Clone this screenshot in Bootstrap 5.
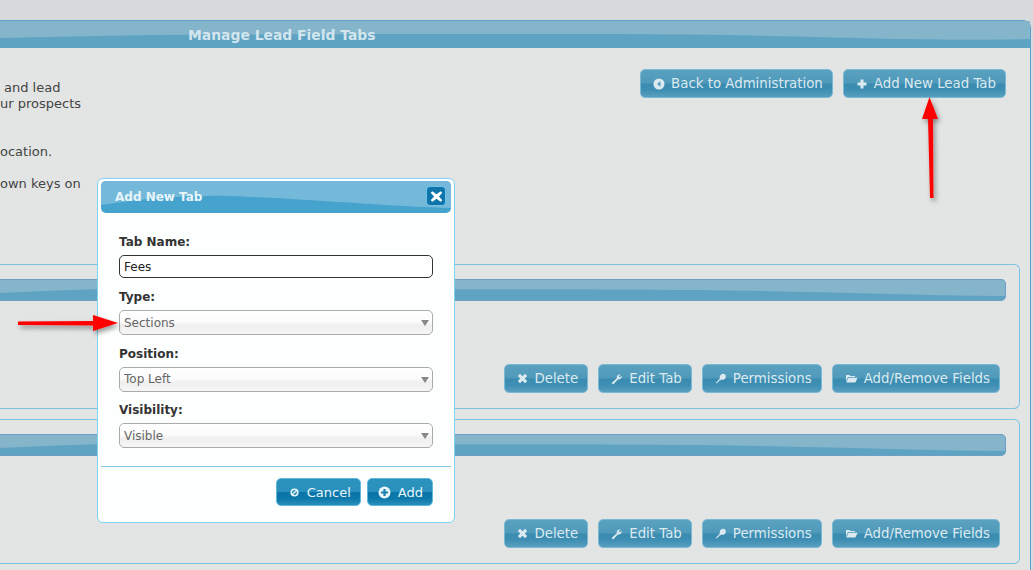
<!DOCTYPE html>
<html lang="en">
<head>
<meta charset="utf-8">
<title>Manage Lead Field Tabs</title>
<link rel="stylesheet" href="https://cdn.jsdelivr.net/npm/bootstrap@5.3.0/dist/css/bootstrap.min.css">
<style>
html,body{height:570px;overflow:hidden}
body{background:#d9dade;font-family:"DejaVu Sans",sans-serif;font-size:13px;color:#444;position:relative;padding-top:20px}
.main-panel{width:1031px;height:560px;background:#e3e5e4;border:1px solid #5f9fd0;border-left:0;border-bottom:0;border-top-right-radius:8px}
.wave-bar{position:relative;overflow:hidden;background:#5fa3c3}
.wave-bar svg.wave{position:absolute;inset:0;width:100%;height:100%}
.main-head{height:27px}
.main-head h1{position:relative;font-size:13.9px;font-weight:700;color:#d3e6ee;margin:0;padding:6px 0 0 188px;line-height:16px}
.top-zone{height:216px;padding:21px 24px 0 0}
.intro{line-height:16px;padding-top:11px}
.intro-line{height:16px;white-space:nowrap}
.intro-first{padding-left:4px}
.intro-gap{margin-top:32px}
.intro-gap-small{margin-top:16px}
.blue-btn{display:inline-flex;align-items:center;gap:6px;height:29px;padding:0 9px 0 12px;border:1px solid #7ab9d4;border-radius:5px;font-size:13.33px;line-height:1;color:#dbeaf0;background:linear-gradient(#5ba1c0 0,#4f99ba 48%,#3a8bb0 52%,#3f8fb4 75%,#599fbe 100%)}
.blue-btn svg{flex:none}
.plus-btn{gap:7px;padding-left:13px}
.section-box{width:1020px;border:1px solid #7cc4e6;border-left:0;border-radius:0 6px 6px 0;height:145px;padding:14px 13px 0 0}
.section-box+.section-box{margin-top:10px}
.section-bar{height:22px;border:1px solid #6d9fc6;border-left:0;border-radius:0 5px 5px 0}
.tools{padding:63px 6px 0 0;gap:10px}
.dialog-box{position:absolute;left:97px;top:178px;width:358px;height:345px;background:#fdfefe;border:1px solid #7fd2f2;border-radius:6px;padding:2px 3px}
.dialog-head{height:32px;border-radius:5px;background:#45a3ce;position:relative;overflow:hidden}
.dialog-head h2{position:relative;font-size:12px;font-weight:700;color:#e6f4fa;margin:0;padding:8px 0 0 14px;line-height:16px}
.x-btn{position:absolute;right:5px;top:5px;width:20px;height:20px;padding:0;border:1px solid #6fc3e8;border-radius:4px;background:#0f74aa;display:flex;align-items:center;justify-content:center}
.dialog-form{padding:22px 18px 0}
.dialog-form label{display:block;font-size:12px;font-weight:700;color:#333;line-height:15px;margin-bottom:5px}
.dialog-form .form-control{height:23px;min-height:0;padding:0 4px;border:1px solid #333;border-radius:5px;font-size:12px;color:#222;background:#fff;margin-bottom:12px;box-shadow:none}
.pick-wrap{position:relative;margin-bottom:11.5px}
.pick-wrap::after{content:"";position:absolute;right:4px;top:10px;border-left:4px solid transparent;border-right:4px solid transparent;border-top:6px solid #888}
.dialog-form .form-select{height:25px;padding:0 4px;border:1px solid #aaa;border-radius:5px;font-size:12px;color:#666;background:linear-gradient(#fff 0,#fcfcfc 45%,#efefef 62%,#f5f5f5 100%);box-shadow:none}
.dialog-rule{border-top:1px solid #8bcbea;margin-top:18px}
.dialog-foot{padding:11px 18px 0 0;gap:6px}
.deep-btn{display:inline-flex;align-items:center;gap:8px;height:28px;padding:0 9px 0 13px;border:1px solid #5fb8dc;border-radius:5px;font-size:13px;line-height:1;color:#e8f6fb;background:linear-gradient(#2b91bd 0,#2a90bc 48%,#0a74a8 52%,#0d78aa 75%,#2b8fbb 100%)}
.deep-add{padding:0 9px 0 10px;gap:7px}
.note-arrow{position:absolute;left:0;top:0;pointer-events:none}
</style>
</head>
<body>
<div class="main-panel">
  <div class="wave-bar main-head">
    <svg class="wave" viewBox="0 0 1031 27" preserveAspectRatio="none"><rect width="1031" height="27" fill="#5fa3c3"/><path d="M0 0H1031V18C1000 19 960 19 900 18C820 16 720 13 620 13C450 13 300 13 150 14C90 15 40 16 0 17Z" fill="#85b5cb"/></svg>
    <h1>Manage Lead Field Tabs</h1>
  </div>
  <div class="top-zone d-flex justify-content-between align-items-start">
    <div class="intro">
      <div class="intro-line intro-first">and lead</div>
      <div class="intro-line">ur prospects</div>
      <div class="intro-line intro-gap">ocation.</div>
      <div class="intro-line intro-gap-small">own keys on</div>
    </div>
    <div class="d-flex" style="gap:10px">
      <button type="button" class="blue-btn">
        <svg width="12" height="12" viewBox="0 0 13 13"><circle cx="6.5" cy="6.5" r="6" fill="#dbeaf0"/><path d="M8 3.5V9.5L4.5 6.5Z" fill="#4f99ba"/></svg>Back to Administration
      </button>
      <button type="button" class="blue-btn plus-btn">
        <svg width="10" height="10" viewBox="0 0 10 10"><path d="M3.5 0.5H6.5V3.5H9.5V6.5H6.5V9.5H3.5V6.5H0.5V3.5H3.5Z" fill="#dbeaf0"/></svg>Add New Lead Tab
      </button>
    </div>
  </div>

  <div class="section-box">
    <div class="wave-bar section-bar"><svg class="wave" viewBox="0 0 1006 20" preserveAspectRatio="none"><rect width="1006" height="20" fill="#5fa3c3"/><path d="M0 0H1006V16C900 15 800 11 700 10C550 9 350 9 100 9C60 10 30 12 0 13Z" fill="#85b5cb"/></svg></div>
    <div class="tools d-flex justify-content-end">
      <button type="button" class="blue-btn"><svg width="11" height="11" viewBox="0 0 11 11"><path d="M0.8 3L3 0.8L5.5 3.3L8 0.8L10.2 3L7.7 5.5L10.2 8L8 10.2L5.5 7.7L3 10.2L0.8 8L3.3 5.5Z" fill="#dbeaf0"/></svg>Delete</button>
      <button type="button" class="blue-btn"><svg width="12" height="12" viewBox="0 0 12 12"><path d="M0.6 10L5.8 5.2C5.4 3 7.2 1.2 9.6 1.6L7.8 3.4L8.6 4.6L10.8 2.8C11 5.2 9 7 6.9 6.5L2.2 11.5Z" fill="#dbeaf0"/></svg>Edit Tab</button>
      <button type="button" class="blue-btn"><svg width="12" height="13" viewBox="0 0 13 13"><path d="M1 11L5.2 6.4C4.6 4 6.2 1.6 8.6 1.4C11 1.3 12.2 3.4 11.6 5.4C11 7.4 8.8 8.4 6.8 7.7L5.6 8.8H4.4V10H3.2L2.4 11.6H1Z" fill="#dbeaf0"/></svg>Permissions</button>
      <button type="button" class="blue-btn"><svg width="13" height="11" viewBox="0 0 13 11"><path d="M1 2H4.5L5.5 3H10V4H3L1 8.5Z" fill="#dbeaf0"/><path d="M3.4 4.8H12.6L10.4 9.6H1.2Z" fill="#dbeaf0"/></svg>Add/Remove Fields</button>
    </div>
  </div>
  <div class="section-box">
    <div class="wave-bar section-bar"><svg class="wave" viewBox="0 0 1006 20" preserveAspectRatio="none"><rect width="1006" height="20" fill="#5fa3c3"/><path d="M0 0H1006V16C900 15 800 11 700 10C550 9 350 9 100 9C60 10 30 12 0 13Z" fill="#85b5cb"/></svg></div>
    <div class="tools d-flex justify-content-end">
      <button type="button" class="blue-btn"><svg width="11" height="11" viewBox="0 0 11 11"><path d="M0.8 3L3 0.8L5.5 3.3L8 0.8L10.2 3L7.7 5.5L10.2 8L8 10.2L5.5 7.7L3 10.2L0.8 8L3.3 5.5Z" fill="#dbeaf0"/></svg>Delete</button>
      <button type="button" class="blue-btn"><svg width="12" height="12" viewBox="0 0 12 12"><path d="M0.6 10L5.8 5.2C5.4 3 7.2 1.2 9.6 1.6L7.8 3.4L8.6 4.6L10.8 2.8C11 5.2 9 7 6.9 6.5L2.2 11.5Z" fill="#dbeaf0"/></svg>Edit Tab</button>
      <button type="button" class="blue-btn"><svg width="12" height="13" viewBox="0 0 13 13"><path d="M1 11L5.2 6.4C4.6 4 6.2 1.6 8.6 1.4C11 1.3 12.2 3.4 11.6 5.4C11 7.4 8.8 8.4 6.8 7.7L5.6 8.8H4.4V10H3.2L2.4 11.6H1Z" fill="#dbeaf0"/></svg>Permissions</button>
      <button type="button" class="blue-btn"><svg width="13" height="11" viewBox="0 0 13 11"><path d="M1 2H4.5L5.5 3H10V4H3L1 8.5Z" fill="#dbeaf0"/><path d="M3.4 4.8H12.6L10.4 9.6H1.2Z" fill="#dbeaf0"/></svg>Add/Remove Fields</button>
    </div>
  </div>
</div>

<div class="dialog-box">
  <div class="dialog-head">
    <svg class="position-absolute top-0 start-0" width="350" height="32" viewBox="0 0 350 32"><path d="M0 0H350V27C300 26 220 19 130 15C80 14 40 18 0 24Z" fill="#74b9d9"/></svg>
    <h2>Add New Tab</h2>
    <button type="button" class="x-btn" aria-label="Close"><svg width="13" height="13" viewBox="0 0 11 11"><path d="M2 1L5.5 3.6L9 1L10.4 2.4L7.6 5.5L10.4 8.6L9 10L5.5 7.4L2 10L0.6 8.6L3.4 5.5L0.6 2.4Z" fill="#fff"/></svg></button>
  </div>
  <form class="dialog-form">
    <label for="f1">Tab Name:</label>
    <input id="f1" class="form-control" type="text" value="Fees">
    <label for="f2">Type:</label>
    <div class="pick-wrap"><select id="f2" class="form-select"><option>Sections</option></select></div>
    <label for="f3">Position:</label>
    <div class="pick-wrap"><select id="f3" class="form-select"><option>Top Left</option></select></div>
    <label for="f4">Visibility:</label>
    <div class="pick-wrap"><select id="f4" class="form-select"><option>Visible</option></select></div>
  </form>
  <div class="dialog-rule"></div>
  <div class="dialog-foot d-flex justify-content-end">
    <button type="button" class="deep-btn"><svg width="9" height="9" viewBox="0 0 11 11"><circle cx="5.5" cy="5.5" r="4" fill="none" stroke="#e8f6fb" stroke-width="2"/><path d="M3 8L8 3" stroke="#e8f6fb" stroke-width="1.8"/></svg>Cancel</button>
    <button type="button" class="deep-btn deep-add"><svg width="13" height="13" viewBox="0 0 13 13"><circle cx="6.5" cy="6.5" r="6" fill="#e8f6fb"/><path d="M5.4 3H7.6V5.4H10V7.6H7.6V10H5.4V7.6H3V5.4H5.4Z" fill="#1a80b0"/></svg>Add</button>
  </div>
</div>

<svg class="note-arrow" width="1033" height="570" viewBox="0 0 1033 570">
  <defs><filter id="shade" x="-30%" y="-30%" width="160%" height="160%"><feDropShadow dx="2" dy="3" stdDeviation="2.5" flood-color="#000" flood-opacity=".4"/></filter></defs>
  <g filter="url(#shade)" fill="#ff0000">
    <path d="M928 118L933 118L933.5 198L930 198Z"/><path d="M929.5 97L938 119L922 119Z"/>
    <path d="M18 321.5L95 321V325.5L18 325Z"/><path d="M118 323L93 315V331Z"/>
  </g>
</svg>
</body>
</html>
